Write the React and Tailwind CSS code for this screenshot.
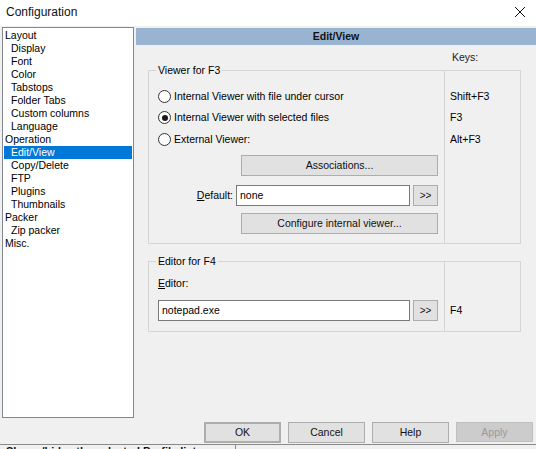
import React from "react";

const font = { fontFamily: '"Liberation Sans", Arial, sans-serif' };

const tree = [
    { label: "Layout", level: 0 },
    { label: "Display", level: 1 },
    { label: "Font", level: 1 },
    { label: "Color", level: 1 },
    { label: "Tabstops", level: 1 },
    { label: "Folder Tabs", level: 1 },
    { label: "Custom columns", level: 1 },
    { label: "Language", level: 1 },
    { label: "Operation", level: 0 },
    { label: "Edit/View", level: 1, selected: true },
    { label: "Copy/Delete", level: 1 },
    { label: "FTP", level: 1 },
    { label: "Plugins", level: 1 },
    { label: "Thumbnails", level: 1 },
    { label: "Packer", level: 0 },
    { label: "Zip packer", level: 1 },
    { label: "Misc.", level: 0 },
];

function Radio({ checked, children }) {
    return (
        <div className="flex items-center h-[21px] gap-[3px]">
            <span className="w-[13px] h-[13px] rounded-full border border-[#333333] bg-white flex items-center justify-center">
                {checked && <span className="w-[6px] h-[6px] rounded-full bg-[#1a1a1a]" />}
            </span>
            <span>{children}</span>
        </div>
    );
}

function Button({ className = "", children }) {
    return (
        <div
            className={
                "h-[21px] flex items-center justify-center bg-[#e1e1e1] border border-[#adadad] text-[#111] " +
                className
            }
        >
            {children}
        </div>
    );
}

function Group({ legend, className = "", children }) {
    return (
        <div className={"relative w-[373px] border border-[#d5d5d5] flex " + className}>
            <span className="absolute -top-[7px] left-[7px] px-[2px] leading-[13px] bg-[#f0f0f0]">
                {legend}
            </span>
            {children}
        </div>
    );
}

export default function App() {
    return (
        <div
            className="w-[536px] h-[449px] overflow-hidden flex flex-col text-[10.5px] leading-[13px] text-[#000]"
            style={font}
        >
            {/* title bar */}
            <div className="h-[26px] bg-white flex items-center justify-between pl-[6px] pr-[8px] pb-[2px]">
                <span className="text-[12px] text-[#111]">Configuration</span>
                <svg width="12" height="12" viewBox="0 0 12 12" className="mr-[2px]">
                    <path d="M1 1 L11 11 M11 1 L1 11" stroke="#111" strokeWidth="1" fill="none" />
                </svg>
            </div>

            <div className="flex-1 bg-[#f0f0f0] flex flex-col">
                <div className="flex pt-[1px]">
                    {/* tree */}
                    <div className="ml-[2px] w-[132px] h-[391px] border border-[#828790] bg-white pt-[1px] px-[1px]">
                        {tree.map((item) => (
                            <div
                                key={item.label}
                                className={
                                    "h-[13px] leading-[13px] " +
                                    (item.level ? "pl-[7px] " : "pl-[1px] ") +
                                    (item.selected ? "bg-[#0078d7] text-white" : "")
                                }
                            >
                                {item.label}
                            </div>
                        ))}
                    </div>

                    {/* right panel */}
                    <div className="ml-[2px] flex-1 flex flex-col">
                        <div className="mt-[1px] h-[17px] bg-[#99b4d1] flex items-center justify-center font-bold text-[#111]">
                            Edit/View
                        </div>

                        <div className="pl-[12px]">
                            <div className="h-[25px] flex items-center pl-[304px] text-[#222]">Keys:</div>

                            <Group legend="Viewer for F3" className="h-[174px]">
                                <div className="w-[295px] pt-[15px] pl-[9px]">
                                    <Radio>Internal Viewer with file under cursor</Radio>
                                    <Radio checked>Internal Viewer with selected files</Radio>
                                    <div className="mt-[1px]">
                                        <Radio>External Viewer:</Radio>
                                    </div>
                                    <Button className="mt-[5px] ml-[83px] w-[197px]">Associations...</Button>
                                    <div className="mt-[9px] flex items-center h-[21px]">
                                        <span className="w-[75px] text-right mr-[3px]">
                                            <span className="underline">D</span>efault:
                                        </span>
                                        <div className="w-[174px] h-[21px] bg-white border border-[#7a7a7a] flex items-center pl-[3px]">
                                            none
                                        </div>
                                        <Button className="ml-[3px] w-[25px] text-[10px]">&gt;&gt;</Button>
                                    </div>
                                    <Button className="mt-[7px] ml-[83px] w-[197px]">Configure internal viewer...</Button>
                                </div>
                                <div className="flex-1 border-l border-[#d5d5d5] pt-[15px] pl-[5px]">
                                    <div className="h-[21px] flex items-center">Shift+F3</div>
                                    <div className="h-[21px] flex items-center">F3</div>
                                    <div className="h-[21px] flex items-center mt-[1px]">Alt+F3</div>
                                </div>
                            </Group>

                            <Group legend="Editor for F4" className="h-[71px] mt-[17px]">
                                <div className="w-[295px] pt-[15px] pl-[9px]">
                                    <div className="h-[13px]">
                                        <span className="underline">E</span>ditor:
                                    </div>
                                    <div className="mt-[10px] flex items-center h-[21px]">
                                        <div className="w-[252px] h-[21px] bg-white border border-[#7a7a7a] flex items-center pl-[3px]">
                                            notepad.exe
                                        </div>
                                        <Button className="ml-[3px] w-[25px] text-[10px]">&gt;&gt;</Button>
                                    </div>
                                </div>
                                <div className="flex-1 border-l border-[#d5d5d5] pt-[38px] pl-[5px]">
                                    <div className="h-[21px] flex items-center">F4</div>
                                </div>
                            </Group>
                        </div>
                    </div>
                </div>

                {/* dialog buttons */}
                <div className="mt-[4px] flex justify-end gap-[7px] pr-[3px]">
                    <Button className="w-[77px] h-[20px] border-2 border-[#0078d7]">OK</Button>
                    <Button className="w-[77px] h-[20px]">Cancel</Button>
                    <Button className="w-[77px] h-[20px]">Help</Button>
                    <div className="w-[77px] h-[20px] flex items-center justify-center bg-[#cccccc] border border-[#bfbfbf] text-[#9a9a9a]">
                        Apply
                    </div>
                </div>
            </div>

            {/* cut-off status strip */}
            <div className="h-[5px] border-t border-[#8a8a8a] bg-[#f0f0f0] flex overflow-hidden">
                <div className="w-[236px] border-r border-[#8a8a8a] pl-[6px] pt-[1px] font-bold text-[11px] leading-[11px] text-[#111]">
                    Shows/hides the selected Profile list
                </div>
            </div>
        </div>
    );
}
